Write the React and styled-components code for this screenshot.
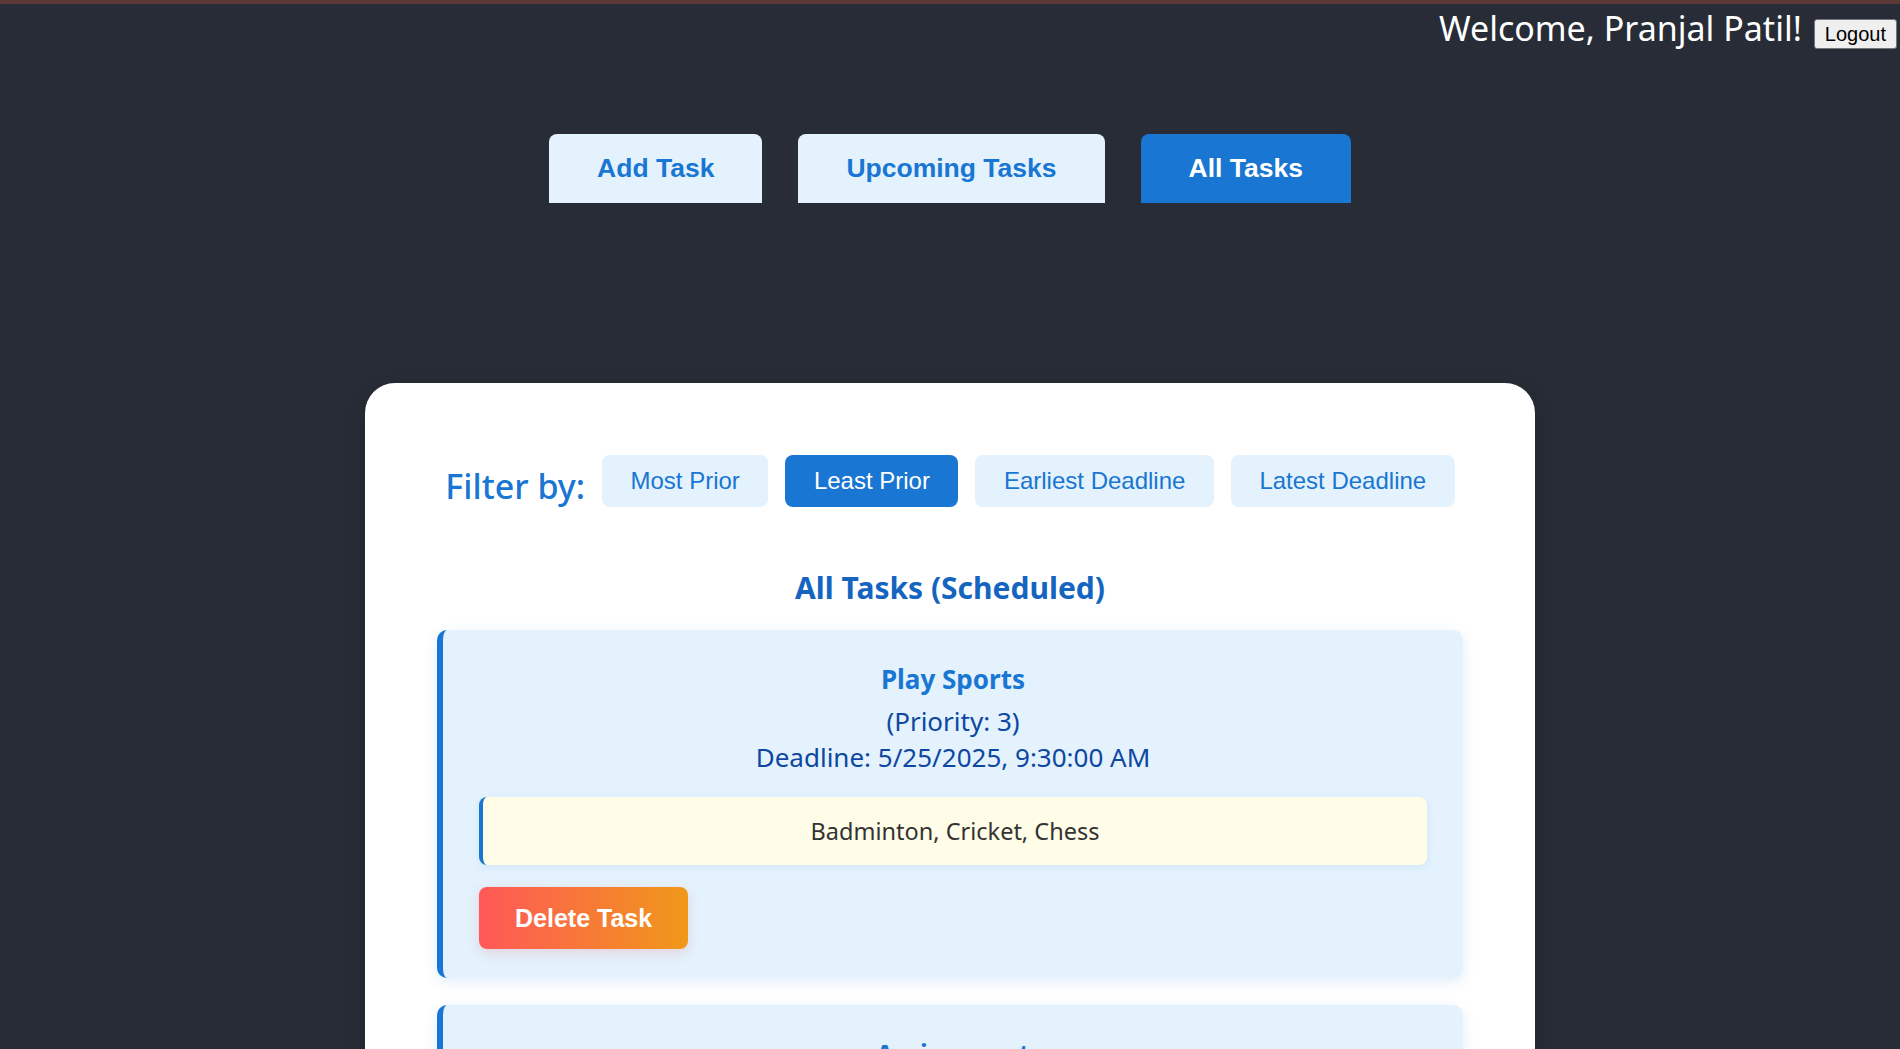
import React, { useState } from "react";
import styled, { createGlobalStyle } from "styled-components";

const GlobalStyle = createGlobalStyle`
  html { scrollbar-width: none; }
  html::-webkit-scrollbar, body::-webkit-scrollbar { display: none; }
  body {
    margin: 0;
    background: #272c36;
    border-top: 4px solid #5b3936;
    font-family: "Segoe UI", "Noto Sans", sans-serif;
  }
`;

const sansText = `"Segoe UI", "Noto Sans", sans-serif`;
const arial = `"Liberation Sans", Arial, sans-serif`;

const Header = styled.header`
  display: flex;
  justify-content: flex-end;
  align-items: baseline;
  gap: 12px;
  padding: 1px 3px 0 0;
`;

const Welcome = styled.h1`
  margin: 0;
  font-family: ${sansText};
  font-size: 34px;
  font-weight: 400;
  color: #ffffff;
`;

const LogoutButton = styled.button`
  font-family: ${arial};
  font-size: 20px;
  color: #000;
  background: #efefef;
  border: 1px solid #767676;
  border-radius: 3px;
  padding: 2px 10px;
  line-height: 24px;
`;

const Nav = styled.nav`
  display: flex;
  justify-content: center;
  gap: 36px;
  margin-top: 83px;
`;

const NavTab = styled.button`
  font-family: ${arial};
  font-size: 26.5px;
  font-weight: 700;
  line-height: 29px;
  padding: 20px 48px;
  border: none;
  border-radius: 8px 8px 0 0;
  background: ${(p) => (p.$active ? "#1976d2" : "#e3f2fd")};
  color: ${(p) => (p.$active ? "#ffffff" : "#1976d2")};
  cursor: pointer;
`;

const Panel = styled.main`
  width: 1170px;
  box-sizing: border-box;
  margin: 180px auto 0;
  padding: 72px 72px 40px;
  background: #ffffff;
  border-radius: 30px;
  box-shadow: 0 8px 24px rgba(0, 0, 0, 0.15);
`;

const FilterRow = styled.div`
  display: flex;
  justify-content: center;
  align-items: center;
  gap: 17px;
`;

const FilterLabel = styled.span`
  padding-top: 10px;
  font-family: ${sansText};
  font-size: 34px;
  line-height: 42px;
  font-weight: 500;
  color: #1976d2;
`;

const FilterButton = styled.button`
  font-family: ${arial};
  font-size: 24px;
  line-height: 28px;
  padding: 12px 28.5px;
  border: none;
  border-radius: 8px;
  background: ${(p) => (p.$active ? "#1976d2" : "#e3f2fd")};
  color: ${(p) => (p.$active ? "#ffffff" : "#1976d2")};
  cursor: pointer;
`;

const ListTitle = styled.h2`
  margin: 61px 0 22px;
  text-align: center;
  font-family: ${sansText};
  font-size: 30px;
  line-height: 40px;
  font-weight: 700;
  color: #1565c0;
`;

const TaskList = styled.div`
  display: flex;
  flex-direction: column;
  gap: 27px;
`;

const TaskCard = styled.article`
  background: #e3f2fd;
  border-left: 6px solid #1976d2;
  border-radius: 10px;
  padding: 32px 36px 29px;
  box-shadow: 0 4px 14px rgba(25, 118, 210, 0.12);
  display: flex;
  flex-direction: column;
  align-items: stretch;
`;

const TaskTitle = styled.h3`
  margin: 0 0 6px;
  text-align: center;
  font-family: ${sansText};
  font-size: 26px;
  line-height: 35px;
  font-weight: 700;
  color: #1976d2;
`;

const TaskMeta = styled.div`
  text-align: center;
  font-family: ${sansText};
  font-size: 26px;
  line-height: 36px;
  color: #0d47a1;
`;

const TaskNote = styled.div`
  margin-top: 22px;
  background: #fffde7;
  border-left: 4px solid #1976d2;
  border-radius: 8px;
  padding: 17px 16px;
  text-align: center;
  font-family: ${sansText};
  font-size: 23.5px;
  line-height: 34px;
  color: #333333;
  box-shadow: 0 2px 8px rgba(25, 118, 210, 0.08);
`;

const DeleteButton = styled.button`
  align-self: flex-start;
  margin-top: 22px;
  height: 62px;
  padding: 0 36px;
  font-family: ${arial};
  font-size: 25px;
  font-weight: 700;
  color: #ffffff;
  border: none;
  border-radius: 8px;
  background: linear-gradient(90deg, #ff5858 0%, #f09819 100%);
  box-shadow: 0 4px 12px rgba(240, 88, 88, 0.2);
  cursor: pointer;
`;

const tasks = [
  {
    title: "Play Sports",
    priority: 3,
    deadline: "5/25/2025, 9:30:00 AM",
    note: "Badminton, Cricket, Chess",
  },
  {
    title: "Assignment",
    priority: 2,
    deadline: "5/26/2025, 11:00:00 AM",
    note: "Complete DBMS assignment",
  },
];

const filters = ["Most Prior", "Least Prior", "Earliest Deadline", "Latest Deadline"];
const tabs = ["Add Task", "Upcoming Tasks", "All Tasks"];

export default function App() {
  const [tab, setTab] = useState("All Tasks");
  const [filter, setFilter] = useState("Least Prior");

  return (
    <>
      <GlobalStyle />
      <Header>
        <Welcome>Welcome, Pranjal Patil!</Welcome>
        <LogoutButton>Logout</LogoutButton>
      </Header>
      <Nav>
        {tabs.map((t) => (
          <NavTab key={t} $active={t === tab} onClick={() => setTab(t)}>
            {t}
          </NavTab>
        ))}
      </Nav>
      <Panel>
        <FilterRow>
          <FilterLabel>Filter by:</FilterLabel>
          {filters.map((f) => (
            <FilterButton key={f} $active={f === filter} onClick={() => setFilter(f)}>
              {f}
            </FilterButton>
          ))}
        </FilterRow>
        <ListTitle>All Tasks (Scheduled)</ListTitle>
        <TaskList>
          {tasks.map((t) => (
            <TaskCard key={t.title}>
              <TaskTitle>{t.title}</TaskTitle>
              <TaskMeta>(Priority: {t.priority})</TaskMeta>
              <TaskMeta>Deadline: {t.deadline}</TaskMeta>
              <TaskNote>{t.note}</TaskNote>
              <DeleteButton>Delete Task</DeleteButton>
            </TaskCard>
          ))}
        </TaskList>
      </Panel>
    </>
  );
}
